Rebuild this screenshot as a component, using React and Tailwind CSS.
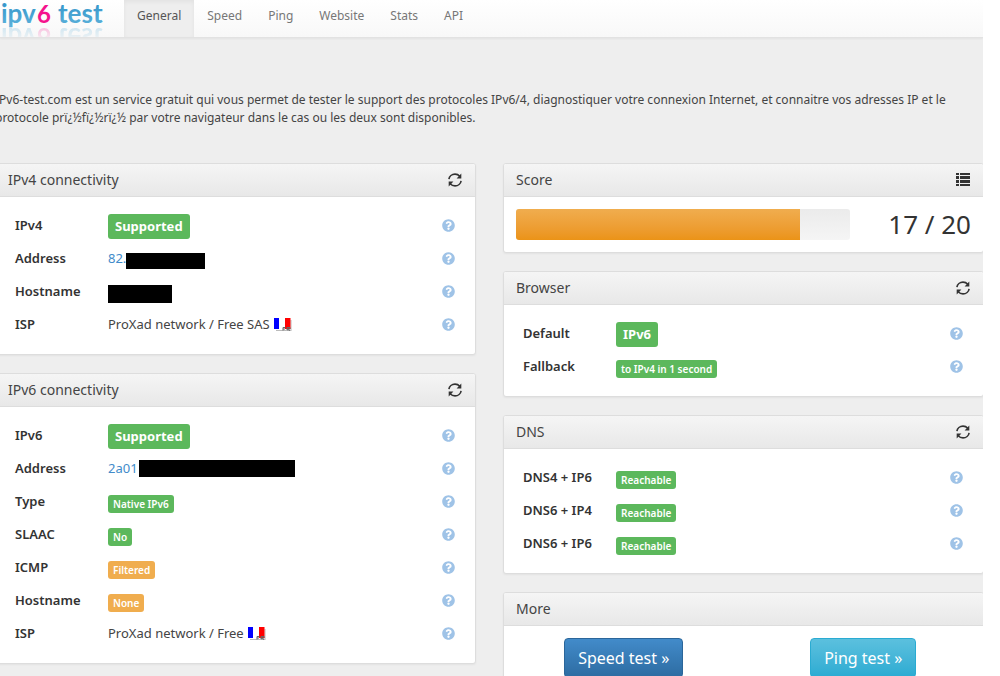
import { FaQuestionCircle } from 'react-icons/fa';

const navItems = ['General', 'Speed', 'Ping', 'Website', 'Stats', 'API'];

const helpLabel = (name) => `Help about ${name}`;

function Logo() {
  return (
    <svg width="104" height="37" viewBox="0 0 104 37" role="img" aria-label="ipv6 test" className="block">
      <defs>
        <linearGradient id="logoBlue" x1="0" y1="0" x2="0" y2="1">
          <stop offset="0" stopColor="#2b8fc6" />
          <stop offset="1" stopColor="#5fb4dc" />
        </linearGradient>
        <linearGradient id="reflectFade" gradientUnits="userSpaceOnUse" x1="0" y1="26" x2="0" y2="38">
          <stop offset="0" stopColor="#fff" stopOpacity="0.28" />
          <stop offset="1" stopColor="#fff" stopOpacity="0.06" />
        </linearGradient>
        <mask id="reflectMask">
          <rect x="0" y="26" width="104" height="12" fill="url(#reflectFade)" />
        </mask>
        <g id="logoText" fontFamily="Lato, sans-serif" fontWeight="700" fontSize="26">
          <text x="1" y="23" fill="url(#logoBlue)">ipv</text>
          <text x="37" y="23" fontSize="24" fill="#f5128c">6</text>
          <text x="58" y="23" fill="url(#logoBlue)">test</text>
        </g>
      </defs>
      <use href="#logoText" />
      <g mask="url(#reflectMask)">
        <use href="#logoText" transform="matrix(1 0 0 -1 0 51)" />
      </g>
    </svg>
  );
}

function RefreshIcon() {
  return (
    <svg width="14" height="14" viewBox="0 0 14 14" aria-hidden="true">
      <g fill="none" stroke="#333" strokeWidth="1.6">
        <path d="M0.9 6.2C1.3 3.3 3.9 1.1 7 1.1c1.9 0 3.6.8 4.8 2.1" />
        <path d="M13.1 7.8C12.7 10.7 10.1 12.9 7 12.9c-1.9 0-3.6-.8-4.8-2.1" />
      </g>
      <path d="M13.3 0.6v4.9H8.6z" fill="#333" />
      <path d="M0.7 13.4V8.5h4.7z" fill="#333" />
    </svg>
  );
}

function ListIcon() {
  return (
    <svg width="14" height="14" viewBox="0 0 14 14" fill="#333" aria-hidden="true">
      <path d="M0 0h3v2H0zM4 0h10v2H4zM0 3h3v3H0zM4 3h10v3H4zM0 7h3v3H0zM4 7h10v3H4zM0 11h3v2H0zM4 11h10v2H4z" />
    </svg>
  );
}

function FrenchFlag() {
  return (
    <svg width="18" height="14" viewBox="0 0 18 14" role="img" aria-label="France" className="ml-1">
      <path d="M2 12h10v1H2zM16.5 2h1v11h-5v-1h4z" fill="#bbb" />
      <path d="M0 0h5v11H0z" fill="#00f" />
      <path d="M5 0h6v11H5z" fill="#fff" />
      <path d="M11 0h5.5v11H11z" fill="#f00" />
      <path d="M9 12.5V9.5h2.5M9 11h2M13 12.5v-3h3v1.5h-3l3 1.5" fill="none" stroke="#666" strokeWidth="1" />
    </svg>
  );
}

function Badge({ children, color = 'green', large = false }) {
  return (
    <span
      className={`rounded-[3px] text-white ${color === 'green' ? 'bg-[#5cb85c]' : 'bg-[#f0ad4e]'} ${
        large
          ? 'mt-px px-[7px] py-[3px] text-[13px] leading-[19px] font-bold'
          : 'mt-1 px-[5px] text-[10px] leading-[18px] font-semibold'
      }`}
    >
      {children}
    </span>
  );
}

function Row({ label, children }) {
  return (
    <div className="flex h-[33px] items-center px-[19px]">
      <dt className="w-[93px] shrink-0 font-semibold text-[#333]">{label}</dt>
      <dd className="flex flex-1 items-center">{children}</dd>
      <button type="button" aria-label={helpLabel(label)} className="mr-px text-[13px] text-[#9fc3e7]">
        <FaQuestionCircle />
      </button>
    </div>
  );
}

function Panel({ title, action, children }) {
  return (
    <section className="rounded-[3px] border border-[#ddd] bg-white shadow-xs">
      <header className="flex h-[33px] items-center justify-between rounded-t-[2px] border-b border-[#ddd] bg-linear-to-b from-[#f5f5f5] to-[#e8e8e8] px-3">
        <h2 className="text-sm leading-4 text-[#444]">{title}</h2>
        {action === 'refresh' && (
          <button type="button" aria-label={`Refresh ${title}`} className="mr-px">
            <RefreshIcon />
          </button>
        )}
        {action === 'list' && (
          <button type="button" aria-label="Score details" className="mr-px">
            <ListIcon />
          </button>
        )}
      </header>
      <div className="pt-3 pb-[13px]">{children}</div>
    </section>
  );
}

function App() {
  const score = 17;
  const maxScore = 20;

  return (
    <div className="min-h-screen bg-white pr-[17px] font-['Noto_Sans',sans-serif] text-[13px] text-[#444]">
      <div className="min-h-screen overflow-hidden bg-[#eee]">
        {/* Navbar */}
        <nav className="flex h-[38px] border-b border-[#e2e2e2] bg-linear-to-b from-white to-[#f8f8f8] shadow-xs">
          <a href="#home" className="mr-5">
            <Logo />
          </a>
          {navItems.map((item) => (
            <a
              key={item}
              href={`#${item.toLowerCase()}`}
              className={`px-[13px] pt-1 text-xs leading-6 ${
                item === 'General' ? 'bg-[#eee] text-[#555] shadow-inner' : 'text-[#777]'
              }`}
            >
              {item}
            </a>
          ))}
        </nav>

        <main className="-mr-px -ml-[5px] pt-[53px]">
          <p className="mb-9 text-xs leading-[18px] text-[#444]">
            IPv6-test.com est un service gratuit qui vous permet de tester le support des protocoles IPv6/4, diagnostiquer
            votre connexion Internet, et connaitre vos adresses IP et le protocole prï¿½fï¿½rï¿½ par votre navigateur dans le
            cas ou les deux sont disponibles.
          </p>

          <div className="grid grid-cols-2 items-start gap-[27px]">
            <div className="flex flex-col gap-[18px]">
              <Panel title="IPv4 connectivity" action="refresh">
                <dl>
                  <Row label="IPv4">
                    <Badge large>Supported</Badge>
                  </Row>
                  <Row label="Address">
                    <a href="#address" className="text-[#428bca]">82.</a>
                    <span className="mt-1 h-4 w-[79px] bg-black" />
                  </Row>
                  <Row label="Hostname">
                    <span className="mt-1 h-[18px] w-16 bg-black" />
                  </Row>
                  <Row label="ISP">
                    ProXad network / Free SAS <FrenchFlag />
                  </Row>
                </dl>
              </Panel>

              <Panel title="IPv6 connectivity" action="refresh">
                <dl>
                  <Row label="IPv6">
                    <Badge large>Supported</Badge>
                  </Row>
                  <Row label="Address">
                    <a href="#address6" className="text-[#428bca]">2a01</a>
                    <span className="ml-px h-[17px] w-[156px] bg-black" />
                  </Row>
                  <Row label="Type">
                    <Badge>Native IPv6</Badge>
                  </Row>
                  <Row label="SLAAC">
                    <Badge>No</Badge>
                  </Row>
                  <Row label="ICMP">
                    <Badge color="orange">Filtered</Badge>
                  </Row>
                  <Row label="Hostname">
                    <Badge color="orange">None</Badge>
                  </Row>
                  <Row label="ISP">
                    ProXad network / Free <FrenchFlag />
                  </Row>
                </dl>
              </Panel>
            </div>

            <div className="flex flex-col gap-[18px]">
              <Panel title="Score" action="list">
                <div className="flex h-[30px] items-center px-3">
                  <div
                    role="progressbar"
                    aria-label="Score"
                    aria-valuenow={score}
                    aria-valuemax={maxScore}
                    className="h-[31px] flex-1 overflow-hidden rounded-[3px] bg-linear-to-b from-[#ebebeb] to-[#f5f5f5]"
                  >
                    <div
                      className="h-full bg-linear-to-b from-[#f0ad4e] to-[#eb9316]"
                      style={{ width: `${(score / maxScore) * 100}%` }}
                    />
                  </div>
                  <div className="w-[121px] text-right text-[26px] leading-[30px] text-[#333]">
                    {score} / {maxScore}
                  </div>
                </div>
              </Panel>

              <Panel title="Browser" action="refresh">
                <dl>
                  <Row label="Default">
                    <Badge large>IPv6</Badge>
                  </Row>
                  <Row label="Fallback">
                    <Badge>to IPv4 in 1 second</Badge>
                  </Row>
                </dl>
              </Panel>

              <Panel title="DNS" action="refresh">
                <dl>
                  <Row label="DNS4 + IP6">
                    <Badge>Reachable</Badge>
                  </Row>
                  <Row label="DNS6 + IP4">
                    <Badge>Reachable</Badge>
                  </Row>
                  <Row label="DNS6 + IP6">
                    <Badge>Reachable</Badge>
                  </Row>
                </dl>
              </Panel>

              <Panel title="More">
                <div className="grid grid-cols-2 justify-items-center">
                  <a
                    href="#speed"
                    className="rounded border border-[#2b669a] bg-linear-to-b from-[#428bca] to-[#2d6ca2] px-[13px] py-2 text-base leading-[22px] text-white"
                  >
                    Speed test »
                  </a>
                  <a
                    href="#ping"
                    className="rounded border border-[#2aabd2] bg-linear-to-b from-[#5bc0de] to-[#2aabd2] px-[13px] py-2 text-base leading-[22px] text-white"
                  >
                    Ping test »
                  </a>
                </div>
              </Panel>
            </div>
          </div>
        </main>
      </div>
    </div>
  );
}

export default App;
